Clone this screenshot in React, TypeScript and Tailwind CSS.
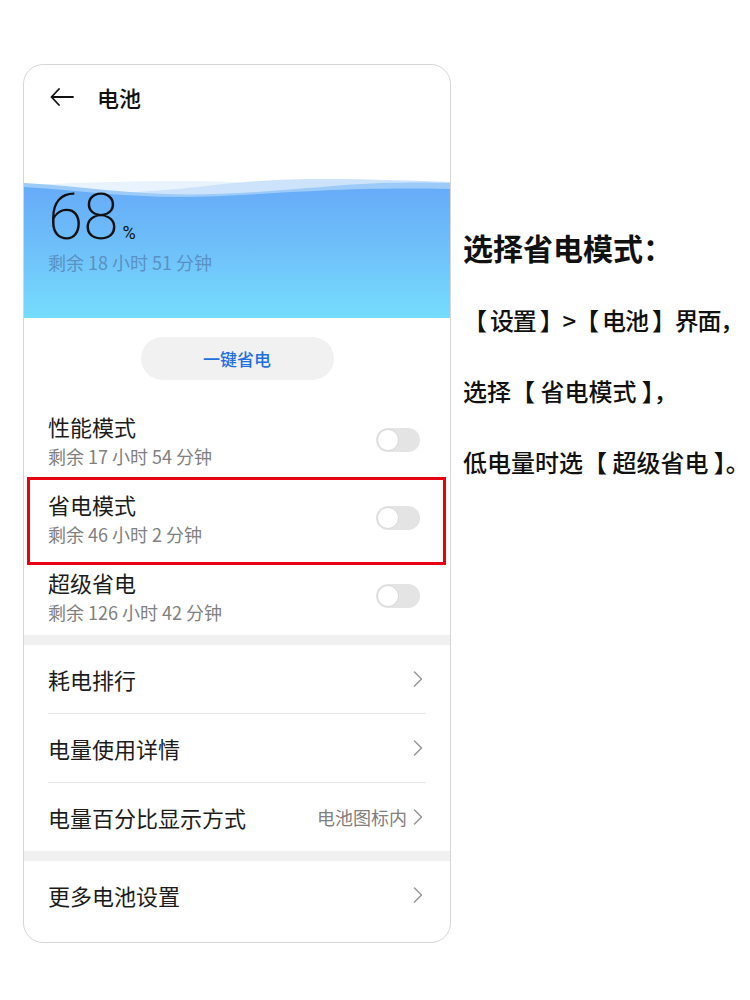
import React from "react";

/* ------------------------------ small pieces ------------------------------ */
const cjk = "font-['Noto_Sans_CJK_SC',sans-serif]";

function BackArrow() {
  return (
    <svg width="24" height="18" viewBox="0 0 24 18" fill="none">
      <path
        d="M9 1 L1.5 9 L9 17 M1.5 9 H23"
        stroke="#111"
        strokeWidth="1.8"
        strokeLinecap="round"
        strokeLinejoin="round"
      />
    </svg>
  );
}

function Chevron() {
  return (
    <svg width="10" height="18" viewBox="0 0 10 18" fill="none">
      <path
        d="M1.5 2 L8.5 9 L1.5 16"
        stroke="#9a9a9a"
        strokeWidth="1.6"
        strokeLinecap="round"
        strokeLinejoin="round"
      />
    </svg>
  );
}

function Toggle() {
  return (
    <div className="relative w-[44px] h-[24px] rounded-full bg-[#e4e4e4]">
      <div className="absolute left-[1px] top-[1px] w-[22px] h-[22px] rounded-full bg-white border border-[#d8d8d8]" />
    </div>
  );
}

function Wave() {
  return (
    <svg
      className="absolute inset-0 w-full h-full"
      viewBox="0 0 426 142"
      preserveAspectRatio="none"
    >
      <defs>
        <linearGradient id="bat" x1="0" y1="0" x2="0" y2="142" gradientUnits="userSpaceOnUse">
          <stop offset="0.1" stopColor="#67acf8" />
          <stop offset="0.55" stopColor="#6fc2fa" />
          <stop offset="1" stopColor="#75ddfd" />
        </linearGradient>
      </defs>
      <path d="M0,9 C50,7 100,5 160,5 C200,5 220,7 240,8 V142 H0 Z" fill="#e8f3fe" />
      <path d="M0,20 C80,20 150,14 200,8 C240,4 270,3 300,3 C350,3 390,5 426,6 V142 H0 Z" fill="#cce3fb" />
      <path
        d="M0,7 C40,9 90,16 140,18 C200,20 260,14 320,9 C360,6 400,6 426,7 V142 H0 Z"
        fill="#9ccaf9"
      />
      <path d="M0,11 C50,14 100,21 155,21 C230,21 300,10 426,13 V142 H0 Z" fill="url(#bat)" />
    </svg>
  );
}

/* --------------------------------- rows ---------------------------------- */
const modes = [
  { title: "性能模式", sub: "剩余 17 小时 54 分钟" },
  { title: "省电模式", sub: "剩余 46 小时 2 分钟", marked: true },
  { title: "超级省电", sub: "剩余 126 小时 42 分钟" },
];

function ModeRow({ title, sub, marked }: { title: string; sub: string; marked?: boolean }) {
  return (
    <div className="relative h-[78px] flex items-center justify-between pl-[24px] pr-[30px]">
      <div className="flex flex-col">
        <span className="text-[22px] leading-[30px] text-[#1c1c1c]">{title}</span>
        <span className="mt-[2px] text-[18px] leading-[26px] text-[#808080]">{sub}</span>
      </div>
      <Toggle />
      {marked && (
        <div className="absolute left-[3px] right-[4px] top-[-2px] bottom-[-8px] border-[3px] border-[#e60012] z-10" />
      )}
    </div>
  );
}

function LinkRow({ title, value }: { title: string; value?: string }) {
  return (
    <div className="h-[68px] flex items-center justify-between pl-[24px] pr-[27px]">
      <span className="text-[22px] leading-[30px] text-[#1c1c1c]">{title}</span>
      <div className="flex items-center gap-[6px]">
        {value && <span className="text-[18px] text-[#808080]">{value}</span>}
        <Chevron />
      </div>
    </div>
  );
}

/* -------------------------------- page ----------------------------------- */
export default function App() {
  return (
    <div className={`w-[750px] h-[1000px] bg-white flex pt-[64px] pl-[23px] ${cjk}`}>
      {/* phone card */}
      <div className="w-[428px] h-[879px] shrink-0 border border-[#d6d6d6] rounded-[20px] overflow-hidden flex flex-col">
        {/* header */}
        <div className="h-[64px] flex items-center pl-[26px] gap-[23px]">
          <BackArrow />
          <span className="text-[22px] font-medium text-[#111]">电池</span>
        </div>

        {/* battery level */}
        <div className="relative mt-[47px] h-[142px]">
          <Wave />
          <div className="relative pl-[24px] pt-[10px]">
            <div className="flex items-baseline">
              <span className="font-['Roboto',sans-serif] font-extralight text-[64px] leading-[64px] text-[#111]">
                68
              </span>
              <span className="ml-[4px] font-['Roboto',sans-serif] text-[18px] text-[#111]">%</span>
            </div>
            <div className="text-[18px] leading-[24px] text-[#5b90c2]">剩余 18 小时 51 分钟</div>
          </div>
        </div>

        {/* one-key save */}
        <div className="mt-[19px] mx-auto w-[193px] h-[43px] rounded-full bg-[#f1f1f1] flex items-center justify-center">
          <span className="text-[17px] font-medium text-[#1e6fe0]">一键省电</span>
        </div>

        {/* modes */}
        <div className="mt-[21px] flex flex-col">
          {modes.map((m) => (
            <ModeRow key={m.title} {...m} />
          ))}
        </div>

        <div className="h-[10px] bg-[#f1f1f1]" />

        <LinkRow title="耗电排行" />
        <div className="mx-[24px] h-px bg-[#e6e6e6]" />
        <LinkRow title="电量使用详情" />
        <div className="mx-[24px] h-px bg-[#e6e6e6]" />
        <LinkRow title="电量百分比显示方式" value="电池图标内" />

        <div className="h-[10px] bg-[#f1f1f1]" />

        <LinkRow title="更多电池设置" />
      </div>

      {/* instructions */}
      <div className="ml-[12px] mt-[163px] flex flex-col text-[#111] whitespace-nowrap">
        <div className="text-[30px] leading-[40px] font-bold">选择省电模式：</div>
        <div className="mt-[35px] text-[24px] leading-[36px] font-medium tracking-[-1.2px]">
          {"【 设置 】>【 电池 】界面，"}
        </div>
        <div className="mt-[35px] text-[24px] leading-[36px] font-medium">选择【 省电模式 】，</div>
        <div className="mt-[35px] text-[24px] leading-[36px] font-medium">低电量时选【 超级省电 】。</div>
      </div>
    </div>
  );
}
